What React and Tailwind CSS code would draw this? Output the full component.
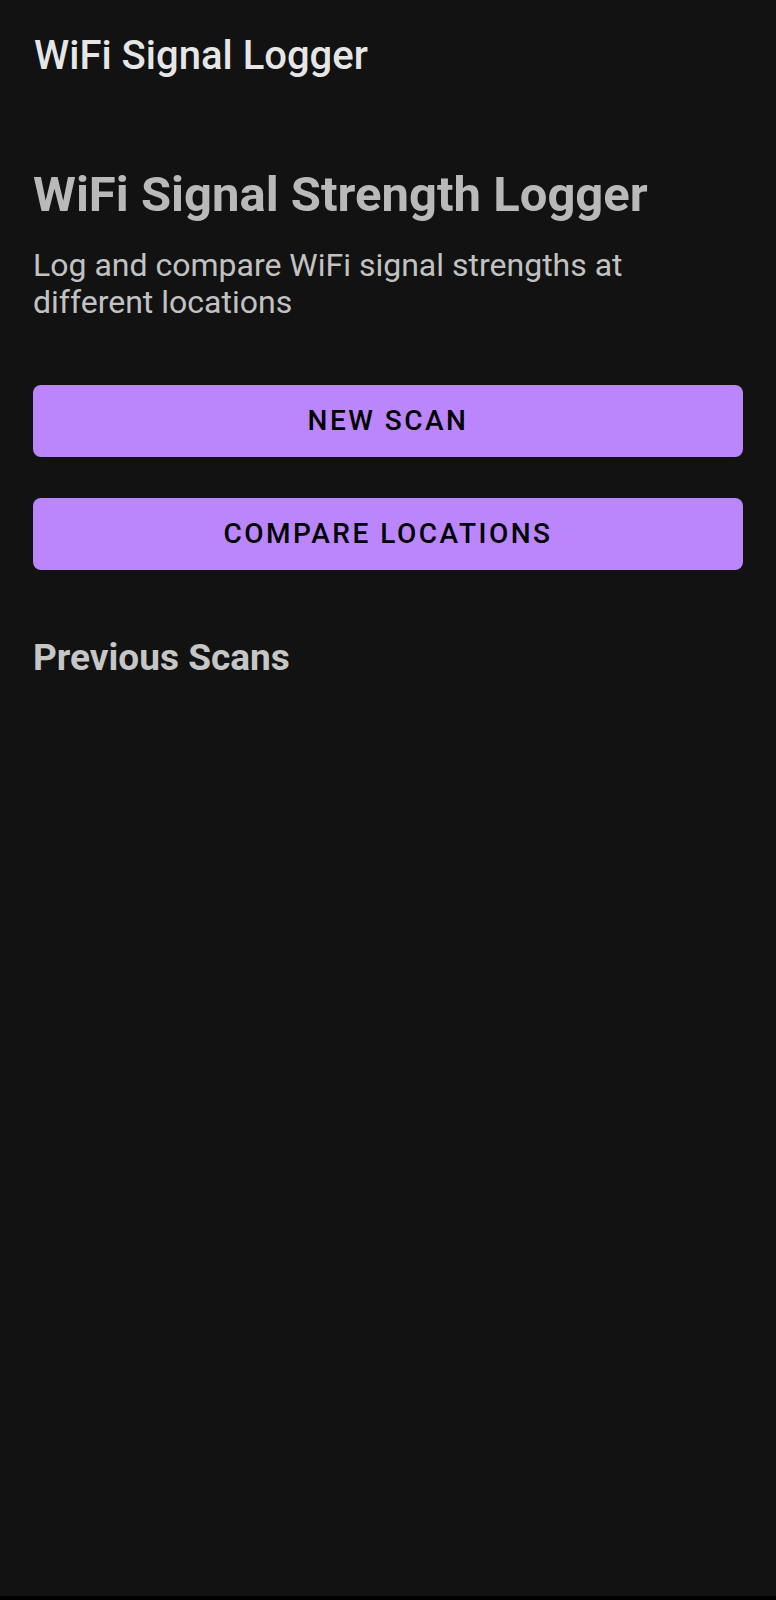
export default function App() {
  return (
    <div className="h-[1600px] bg-[#121212] flex flex-col font-['Roboto',sans-serif]">
      {/* toolbar */}
      <div className="h-[112px] flex items-center px-[34px]">
        <h1 className="text-[40px] leading-[48px] font-medium text-[#e6e6e6]">WiFi Signal Logger</h1>
      </div>

      <div className="flex-1 px-[33px]">
        <h2 className="mt-[55px] text-[49px] leading-[56px] font-bold text-[#b9b9b9]">
          WiFi Signal Strength Logger
        </h2>
        <p className="mt-[24px] text-[32px] leading-[37px] text-[#c2c2c2]">
          Log and compare WiFi signal strengths at different locations
        </p>

        <div className="mt-[64px] flex flex-col gap-[41px]">
          <button className="h-[72px] w-full rounded-[8px] bg-[#bb86fc] text-[28px] font-medium tracking-[2.5px] text-black">
            NEW SCAN
          </button>
          <button className="h-[72px] w-full rounded-[8px] bg-[#bb86fc] text-[28px] font-medium tracking-[2.5px] text-black">
            COMPARE LOCATIONS
          </button>
        </div>

        <h3 className="mt-[66px] text-[37px] leading-[44px] font-bold text-[#c6c6c6]">Previous Scans</h3>
      </div>

      <div className="h-[4px] bg-black" />
    </div>
  );
}
